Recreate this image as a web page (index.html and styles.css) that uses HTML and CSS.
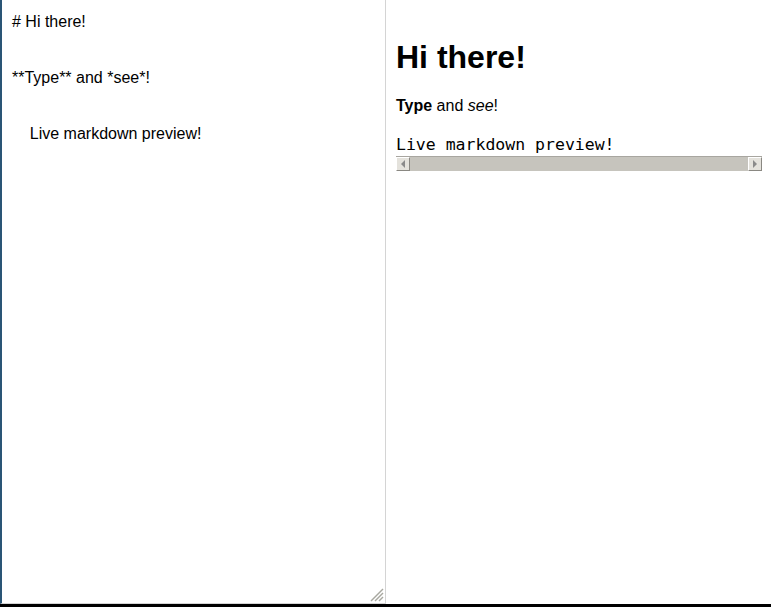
FILE: index.html
```html
<!DOCTYPE html>
<html>
<head>
<meta charset="utf-8">
<link rel="stylesheet" href="styles.css">
</head>
<body>
<div class="app">
  <div class="editor">
    <div class="source"># Hi there!

**Type** and *see*!

    Live markdown preview!</div>
    <svg class="grip" width="14" height="14" viewBox="0 0 14 14">
      <g stroke="#a8a8a0" stroke-width="1.5">
        <line x1="1" y1="13" x2="13" y2="1"/>
        <line x1="5" y1="13" x2="13" y2="5"/>
        <line x1="9" y1="13" x2="13" y2="9"/>
      </g>
    </svg>
  </div>
  <div class="preview">
    <h1 class="title">Hi there!</h1>
    <p class="para"><strong>Type</strong> and <em>see</em>!</p>
    <pre class="code">Live markdown preview!</pre>
    <div class="hscroll">
      <div class="sbtn"><span class="arrow-left"></span></div>
      <div class="track"></div>
      <div class="sbtn"><span class="arrow-right"></span></div>
    </div>
  </div>
</div>
<div class="bottom-bar"></div>
</body>
</html>
```
FILE: styles.css
```css
html, body {
  margin: 0;
  padding: 0;
  background: #fff;
}
.app {
  display: flex;
  height: 604px;
  width: 771px;
}
.editor {
  position: relative;
  flex: none;
  border-left: 2px solid #2a5576;
  border-right: 1px solid #d4d4d4;
  border-bottom: 1px solid #d4d4d4;
  box-sizing: border-box;
  width: 386px;
  height: 604px;
  padding: 8px 10px;
}
.source {
  white-space: pre;
  font-family: "Liberation Sans", Arial, sans-serif;
  font-size: 16px;
  line-height: 28px;
  color: #000;
}
.grip {
  position: absolute;
  right: 1px;
  bottom: 1px;
}
.preview {
  flex: 1;
  padding: 18px 9px 0 10px;
  font-family: "Liberation Sans", Arial, sans-serif;
  font-size: 16px;
  color: #000;
  min-width: 0;
}
.title {
  font-size: 32px;
  font-weight: bold;
  margin: 21px 0 21px;
}
.para {
  margin: 0 0 16px;
  line-height: 18px;
}
.code {
  font-family: "DejaVu Sans Mono", monospace;
  font-size: 16.5px;
  margin: 0;
  padding-top: 3px;
  line-height: 22px;
}
.hscroll {
  display: flex;
  height: 15px;
  margin-top: 0;
  background: #c6c4bd;
  border-top: 1px solid #a8a6a0;
  box-sizing: border-box;
}
.track {
  flex: 1;
}
.sbtn {
  width: 14px;
  height: 14px;
  box-sizing: border-box;
  background: #e4e2dc;
  border: 1px solid #fff;
  border-right-color: #8a8882;
  border-bottom-color: #8a8882;
  display: flex;
  align-items: center;
  justify-content: center;
}
.arrow-left {
  width: 0; height: 0;
  border-top: 4px solid transparent;
  border-bottom: 4px solid transparent;
  border-right: 4px solid #8a8a8a;
}
.arrow-right {
  width: 0; height: 0;
  border-top: 4px solid transparent;
  border-bottom: 4px solid transparent;
  border-left: 4px solid #8a8a8a;
}
.bottom-bar {
  height: 3px;
  background: #000;
}
```
